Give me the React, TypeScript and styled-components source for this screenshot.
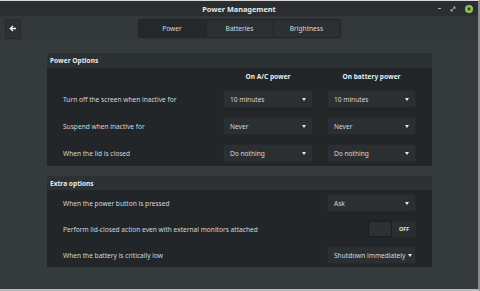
import React from "react";
import styled, { createGlobalStyle } from "styled-components";

const Global = createGlobalStyle`
  html, body { margin: 0; padding: 0; background: #353a3d; }
  body { font-family: "Noto Sans", "DejaVu Sans", sans-serif; }
  * { box-sizing: border-box; }
`;

const Window = styled.div`
  width: 480px;
  height: 291px;
  display: flex;
  flex-direction: column;
  background: #353a3d;
  border-top: 1px solid #d8d8d8;
  border-right: 2px solid #8a8d8f;
  border-bottom: 2px solid #b8babb;
  overflow: hidden;
  color: #d3d7da;
`;

const TitleBar = styled.div`
  height: 15px;
  flex: none;
  display: grid;
  grid-template-columns: 1fr auto 1fr;
  align-items: center;
  background: #2b2e31;
`;

const Title = styled.div`
  grid-column: 2;
  font-weight: 700;
  font-size: 7.3px;
  color: #e6e8ea;
`;

const WinButtons = styled.div`
  grid-column: 3;
  justify-self: end;
  display: flex;
  align-items: center;
  gap: 9px;
  padding-right: 5px;
`;

const MinBtn = styled.div`
  width: 3px;
  height: 1px;
  background: #aeb2b5;
`;

const CloseBtn = styled.div`
  width: 8px;
  height: 8px;
  border-radius: 50%;
  background: #9bc45f;
  display: flex;
  align-items: center;
  justify-content: center;
`;

const HeaderBar = styled.div`
  height: 25px;
  flex: none;
  display: grid;
  grid-template-columns: 1fr auto 1fr;
  align-items: center;
  padding: 0 5px;
  background: #32373a;
`;

const BackButton = styled.div`
  width: 16px;
  height: 20px;
  display: flex;
  align-items: center;
  justify-content: center;
  background: #2d3134;
  border: 1px solid #272a2d;
  border-radius: 1px;
`;

const Tabs = styled.div`
  grid-column: 2;
  display: flex;
  height: 19px;
  border: 1px solid #222527;
  border-radius: 2px;
  overflow: hidden;
`;

const Tab = styled.div<{ $active?: boolean }>`
  width: 67px;
  display: flex;
  align-items: center;
  justify-content: center;
  font-size: 6.6px;
  color: #d6d9dc;
  background: ${(p) => (p.$active ? "#24282a" : "#2c3033")};
  & + & {
    border-left: 1px solid #222527;
  }
`;

const Content = styled.div`
  flex: 1;
  display: flex;
  flex-direction: column;
  gap: 10px;
  padding: 12px 46px 0 47px;
`;

const Frame = styled.section`
  display: flex;
  flex-direction: column;
  background: #222628;
`;

const FrameHeader = styled.div<{ $h: number }>`
  height: ${(p) => p.$h}px;
  display: flex;
  align-items: center;
  padding-left: 3px;
  background: #2c3134;
  font-weight: 700;
  font-size: 6.6px;
  color: #e8eaec;
`;

const OptionsGrid = styled.div`
  display: grid;
  grid-template-columns: 1fr 90px 89px;
  grid-template-rows: 9px repeat(3, 18px);
  column-gap: 14px;
  row-gap: 9px;
  align-items: center;
  padding: 4px 16px 4px 16px;
`;

const ColHead = styled.div`
  font-weight: 700;
  font-size: 6.6px;
  color: #e8eaec;
  text-align: center;
  white-space: nowrap;
`;

const Label = styled.div`
  font-size: 6.6px;
  color: #d3d7da;
  white-space: nowrap;
`;

const Select = styled.div`
  height: 18px;
  display: flex;
  align-items: center;
  gap: 3px;
  padding: 0 6px 0 6px;
  background: #2b2f32;
  border: 1px solid #25292b;
  border-radius: 1px;
  font-size: 6.6px;
  color: #d6d9dc;
  white-space: nowrap;
`;

const SelectText = styled.span`
  flex: 1;
`;

const Caret = styled.span`
  flex: none;
  width: 0;
  height: 0;
  border-left: 2.5px solid transparent;
  border-right: 2.5px solid transparent;
  border-top: 3px solid #e8eaec;
`;

const ExtraGrid = styled.div`
  display: grid;
  grid-template-columns: 1fr 89px;
  grid-auto-rows: 18px;
  row-gap: 8px;
  align-items: center;
  padding: 4px 16px 3px 16px;
`;

const SwitchWrap = styled.div`
  justify-self: end;
  display: flex;
  align-items: center;
  height: 16px;
  width: 48px;
  background: #2a2e31;
  border-radius: 1px;
`;

const SwitchKnob = styled.div`
  width: 24px;
  height: 16px;
  background: #2d3134;
  border: 1px solid #1b1e20;
  border-radius: 1px;
`;

const SwitchLabel = styled.div`
  flex: 1;
  text-align: center;
  font-weight: 700;
  font-size: 5.4px;
  color: #e0e3e5;
`;

function Dropdown({ value }: { value: string }) {
  return (
    <Select>
      <SelectText>{value}</SelectText>
      <Caret />
    </Select>
  );
}

export default function App() {
  return (
    <>
      <Global />
      <Window>
        <TitleBar>
          <Title>Power Management</Title>
          <WinButtons>
            <MinBtn />
            <svg width="6" height="6" viewBox="0 0 6 6">
              <path d="M1 5 L5 1 M3 1 H5 V3 M1 3 V5 H3" stroke="#aeb2b5" strokeWidth="0.9" fill="none" />
            </svg>
            <CloseBtn>
              <svg width="6" height="6" viewBox="0 0 6 6">
                <circle cx="3" cy="3" r="2.4" fill="#6f9a3c" />
                <path d="M2 2 L4 4 M4 2 L2 4" stroke="#2d3a1e" strokeWidth="0.9" />
              </svg>
            </CloseBtn>
          </WinButtons>
        </TitleBar>
        <HeaderBar>
          <BackButton>
            <svg width="8" height="7" viewBox="0 0 8 7">
              <path d="M7 3.5 H1.5 M4 1 L1.3 3.5 L4 6" stroke="#f0f2f3" strokeWidth="1.3" fill="none" />
            </svg>
          </BackButton>
          <Tabs>
            <Tab $active>Power</Tab>
            <Tab>Batteries</Tab>
            <Tab>Brightness</Tab>
          </Tabs>
        </HeaderBar>
        <Content>
          <Frame>
            <FrameHeader $h={15}>Power Options</FrameHeader>
            <OptionsGrid>
              <span />
              <ColHead>On A/C power</ColHead>
              <ColHead>On battery power</ColHead>
              <Label>Turn off the screen when inactive for</Label>
              <Dropdown value="10 minutes" />
              <Dropdown value="10 minutes" />
              <Label>Suspend when inactive for</Label>
              <Dropdown value="Never" />
              <Dropdown value="Never" />
              <Label>When the lid is closed</Label>
              <Dropdown value="Do nothing" />
              <Dropdown value="Do nothing" />
            </OptionsGrid>
          </Frame>
          <Frame>
            <FrameHeader $h={14}>Extra options</FrameHeader>
            <ExtraGrid>
              <Label>When the power button is pressed</Label>
              <Dropdown value="Ask" />
              <Label>Perform lid-closed action even with external monitors attached</Label>
              <SwitchWrap>
                <SwitchKnob />
                <SwitchLabel>OFF</SwitchLabel>
              </SwitchWrap>
              <Label>When the battery is critically low</Label>
              <Dropdown value="Shutdown immediately" />
            </ExtraGrid>
          </Frame>
        </Content>
      </Window>
    </>
  );
}
